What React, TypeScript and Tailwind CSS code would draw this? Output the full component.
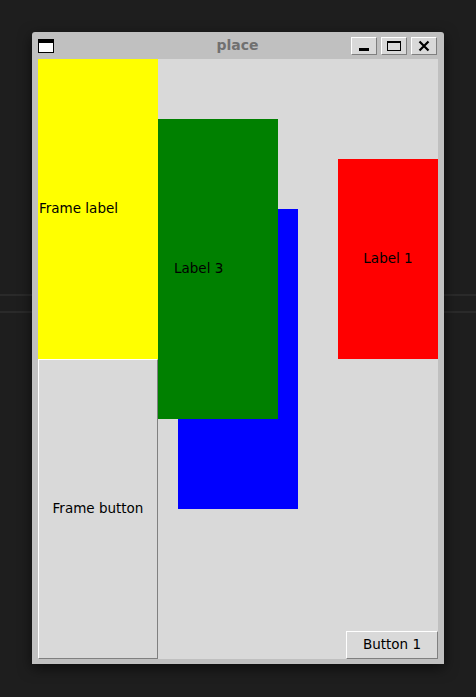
import React from "react";

const font = { fontFamily: '"DejaVu Sans", "Liberation Sans", sans-serif' };

function TitleButton({ children }: { children: React.ReactNode }) {
  return (
    <div className="w-[26px] h-[18px] flex items-center justify-center bg-[#d9d9d9] border border-t-white border-l-white border-b-[#7f7f7f] border-r-[#7f7f7f]">
      {children}
    </div>
  );
}

export default function App() {
  return (
    <div className="relative w-[476px] h-[697px] bg-[#1e1e1e] overflow-hidden" style={font}>
      {/* faint lines behind the window */}
      <div className="absolute left-0 right-0 top-[294px] h-[2px] bg-[#2a2a2a]" />
      <div className="absolute left-0 right-0 top-[311px] h-[2px] bg-[#2a2a2a]" />

      <div className="relative pt-[32px] pl-[32px]">
        <div className="w-[412px] h-[632px] bg-[#c0c0c0] rounded-t-[3px] flex flex-col shadow-[0_4px_14px_rgba(0,0,0,0.6)]">
          {/* title bar */}
          <div className="h-[27px] flex items-center pl-[6px] pr-[7px]">
            <div className="w-[16px] h-[14px] border-[1.5px] border-black border-t-[4px] bg-white mt-[1px]" />
            <div className="flex-1 text-center text-[14px] font-bold text-[#707070] pl-[70px]">place</div>
            <div className="flex gap-[4px]">
              <TitleButton>
                <div className="w-[10px] h-[3px] bg-black mt-[8px]" />
              </TitleButton>
              <TitleButton>
                <div className="w-[14px] h-[10px] border border-black border-t-[2px]" />
              </TitleButton>
              <TitleButton>
                <svg width="12" height="12" viewBox="0 0 12 12">
                  <path d="M1.5 1.5 L10.5 10.5 M10.5 1.5 L1.5 10.5" stroke="black" strokeWidth="2.2" />
                </svg>
              </TitleButton>
            </div>
          </div>

          {/* client area: widgets placed by coordinates */}
          <div className="ml-[6px] w-[400px] h-[600px] relative bg-[#d9d9d9] text-[13.5px] text-black">
            <div className="absolute left-0 top-0 w-[120px] h-[300px] bg-[#ffff00] flex items-center pl-[1px] pb-[2px]">
              Frame label
            </div>
            <div className="absolute left-0 top-[300px] w-[120px] h-[300px] bg-[#d9d9d9] border border-t-white border-l-white border-b-[#808080] border-r-[#808080] flex items-center justify-center pb-[2px]">
              Frame button
            </div>
            <div className="absolute left-[140px] top-[150px] w-[120px] h-[300px] bg-[#0000ff]" />
            <div className="absolute left-[120px] top-[60px] w-[120px] h-[300px] bg-[#008000] flex items-center pl-[16px] pb-[2px]">
              Label 3
            </div>
            <div className="absolute left-[300px] top-[100px] w-[100px] h-[200px] bg-[#ff0000] flex items-center justify-center pb-[2px]">
              Label 1
            </div>
            <div className="absolute left-[308px] top-[572px] w-[92px] h-[28px] bg-[#d9d9d9] border border-t-white border-l-white border-b-[#808080] border-r-[#808080] flex items-center justify-center pb-[1px]">
              Button 1
            </div>
          </div>
        </div>
      </div>
    </div>
  );
}
